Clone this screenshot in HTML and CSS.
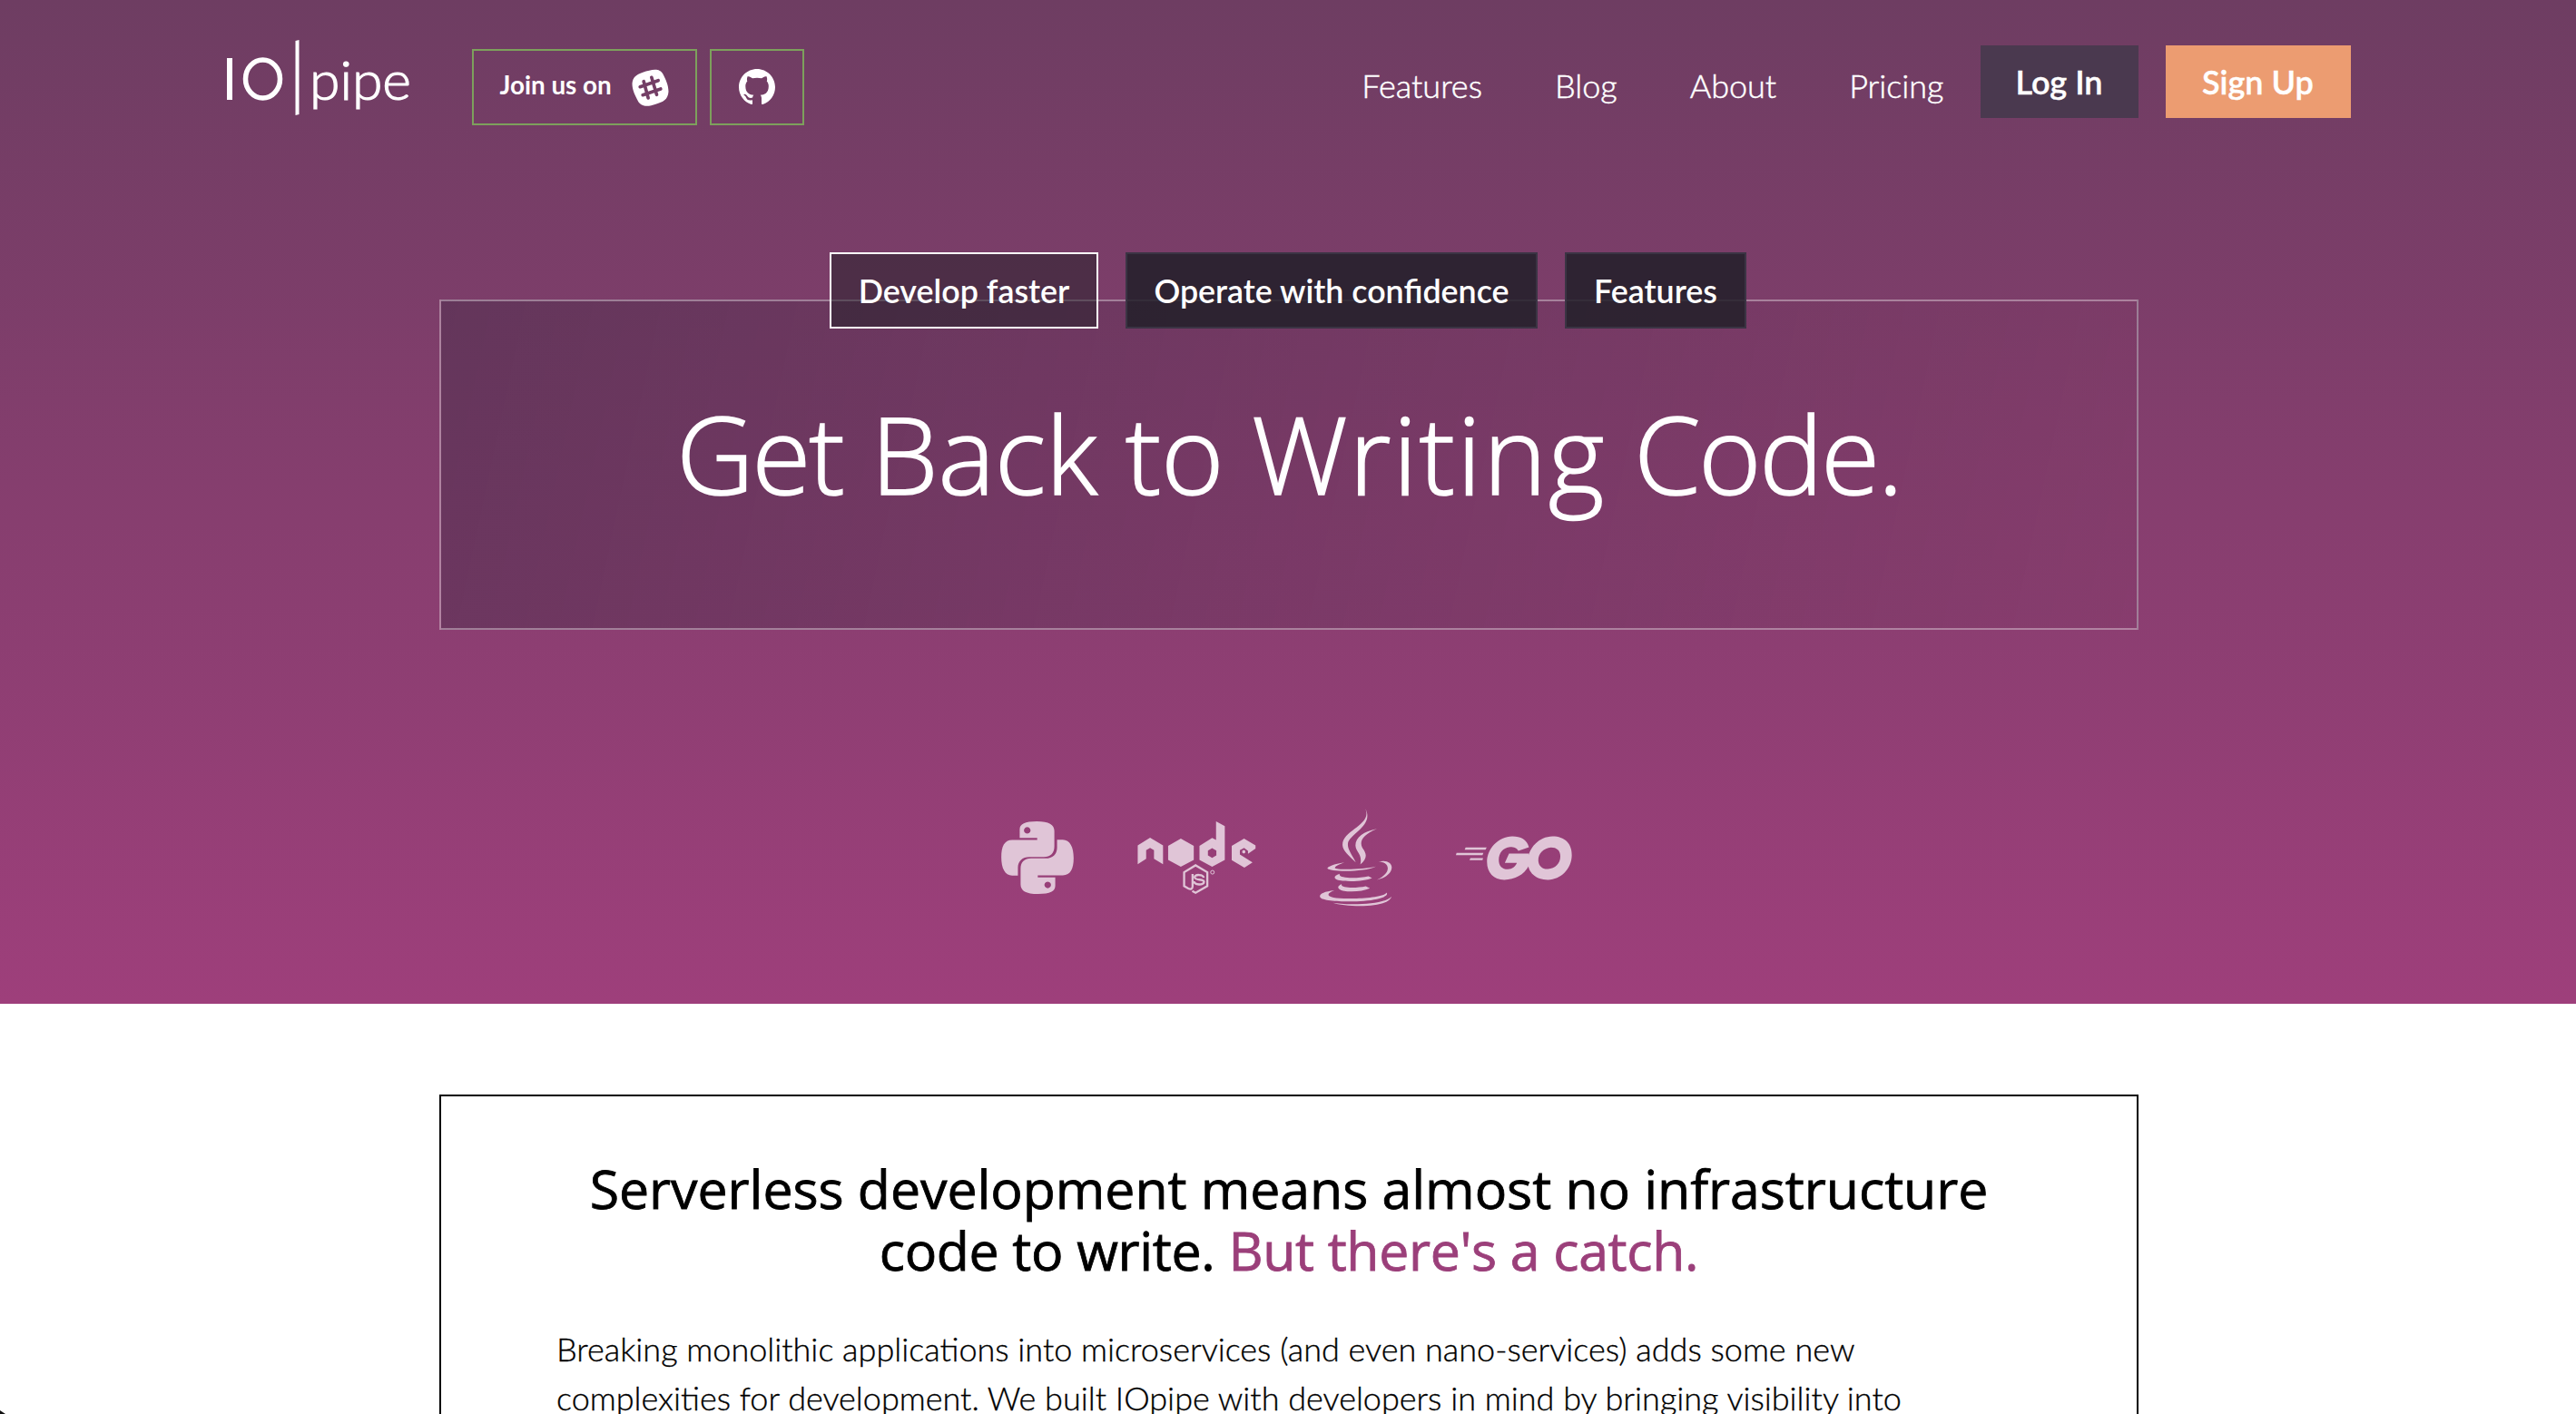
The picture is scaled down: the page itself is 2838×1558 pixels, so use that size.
FILE: index.html
```html
<!DOCTYPE html>
<html lang="en">
<head>
<meta charset="utf-8">
<title>IOpipe</title>
<link rel="stylesheet" href="styles.css">
</head>
<body>
<section class="hero">
  <header class="header">
    <a class="logo">
      <svg width="210" height="90" viewBox="245 40 210 90">
        <rect x="250" y="64" width="6" height="46"/>
        <ellipse class="logo-ring" cx="289.500" cy="87" rx="19" ry="21"/>
        <path d="M325.500 45l4-1v82l-4 1z"/>
        <text class="logo-text" x="341" y="110" textLength="112" lengthAdjust="spacingAndGlyphs">pipe</text>
      </svg>
    </a>
    <div class="social">
      <a class="social-link join">
        <span class="join-text">Join us on</span>
        <svg width="41" height="41" viewBox="47 58 122 123">
          <path d="M83 69C112 59 139 53 150 75C159 93 168 111 168 133C166 160 150 167 126 174C104 182 79 186 67 164C58 145 48 129 48 106C50 85 61 77 83 69Z"/>
          <path class="hash" d="M86 99L101 154M112 86L129 143M74 117L134 96M83 144L142 124"/>
        </svg>
      </a>
      <a class="social-link github">
        <svg width="40" height="40" viewBox="0 0 16 16"><path d="M8 0C3.580 0 0 3.580 0 8c0 3.540 2.290 6.530 5.470 7.590.4.070.55-.17.55-.38 0-.19-.01-.82-.01-1.490-2.010.37-2.530-.49-2.690-.94-.09-.23-.48-.94-.82-1.130-.28-.15-.68-.52-.01-.53.63-.01 1.080.58 1.230.82.72 1.210 1.870.87 2.330.66.07-.52.28-.87.51-1.070-1.780-.2-3.640-.89-3.640-3.950 0-.87.31-1.590.82-2.150-.08-.2-.36-1.020.08-2.120 0 0 .67-.21 2.200.82.64-.18 1.320-.27 2-.27s1.360.09 2 .27c1.530-1.040 2.200-.82 2.200-.82.44 1.100.16 1.920.08 2.120.51.56.82 1.270.82 2.150 0 3.070-1.870 3.750-3.650 3.950.29.25.54.73.54 1.480 0 1.070-.01 1.930-.01 2.200 0 .21.15.46.55.38A8.010 8.010 0 0 0 16 8c0-4.420-3.580-8-8-8z"/></svg>
      </a>
    </div>
    <nav class="nav">
      <a class="nav-link">Features</a>
      <a class="nav-link">Blog</a>
      <a class="nav-link">About</a>
      <a class="nav-link">Pricing</a>
    </nav>
    <div class="actions">
      <a class="button login">Log In</a>
      <a class="button signup">Sign Up</a>
    </div>
  </header>

  <div class="pitch">
    <div class="tabs">
      <a class="tab tab-develop">Develop faster</a>
      <a class="tab tab-operate">Operate with confidence</a>
      <a class="tab tab-features">Features</a>
    </div>
    <h1 class="title"><span class="snug">Get</span> Back to <span class="loose">Writing</span> <span class="tight">Code.</span></h1>
  </div>

  <div class="languages">
    <svg class="python" viewBox="72 101 240 241">
      <path id="snake" fill-rule="evenodd" d="M133 156V128C133 110 150 101 190 101C230 101 248 112 248 133V184C248 207 235 219 213 219H165C142 219 127 233 127 255V281H108C84 281 72 256 72 220C72 185 82 163 108 163H191V156ZM158 120a11 11 0 1 0 .1 0Z"/>
      <use href="#snake" transform="rotate(180 192 221.500)"/>
    </svg>
    <svg class="node" viewBox="522 101 392 241">
      <path fill-rule="evenodd" d="M522 243V181L563 155L606 181V243L576 225V197L563 189L550 197V225ZM665 158L708 182V229L665 252L623 229V182ZM782 101L811 117V229L769 252L727 229V182L769 156L782 163ZM769 190L755 198V214L769 222L783 214V198ZM875 158L913 181V191L888 209V199L875 189L861 197V211L903 237L876 255L834 230V182Z"/>
      <path d="M874 196l5 3v6l-5 3l-5-3v-6z"/>
      <path class="line" d="M703 332L714 338L753 316V270L714 247L676 270V316L690 324C698 328 704 325 704 317V276"/>
      <path class="line" d="M741 288C740 277 710 275 711 287C712 298 742 291 742 302C742 314 709 313 709 300"/>
      <circle class="mark" cx="770" cy="270" r="6"/>
    </svg>
    <svg class="java" viewBox="104 60 240 325">
      <path d="M255 61C278 115 180 130 179 180C180 200 200 215 223 238C208 208 195 195 197 175C200 145 285 115 255 61ZM293 127C250 135 222 155 222 182C223 205 246 210 238 245C262 225 260 210 245 190C233 168 248 145 293 127ZM185 238C150 243 128 253 129 258C135 270 250 272 290 252C250 262 157 264 154 256C154 250 170 244 185 238ZM298 236C325 228 345 240 342 258C339 278 315 292 293 296C318 284 330 270 329 256C327 242 315 236 298 236ZM170 276C145 284 152 293 165 297C200 304 255 300 277 290L265 284C230 292 160 292 170 276ZM176 310C158 319 163 327 180 332C210 338 245 334 270 324L256 317C225 324 170 324 176 310ZM152 331C115 335 100 345 105 354C115 368 200 370 250 366C300 362 335 350 325 338C318 352 250 358 200 358C130 358 115 345 152 331ZM147 372C190 386 330 392 342 351C325 370 270 377 215 377C185 377 160 374 147 372Z"/>
    </svg>
    <svg class="go" viewBox="555 149 385 146">
      <path d="M587 187H657L653 194H584ZM557 205H646L643 212H555ZM603 222H645L643 229H600Z"/>
      <path d="M797 186L762 198C757 188 748 185 735 185C711 187 697 205 697 228C697 248 708 259 727 259C742 259 752 250 757 238H717L731 207H797V247C781 278 750 293 715 294C680 294 658 270 658 235C658 190 695 152 742 150C770 150 790 161 797 186Z"/>
      <path fill-rule="evenodd" d="M875 150C915 150 940 174 939 213C938 258 903 293 860 294C820 294 792 270 793 232C795 187 831 151 875 150ZM870 187C846 189 828 206 828 230C829 248 842 259 860 258C884 257 901 240 901 216C901 197 889 187 870 187Z"/>
    </svg>
  </div>
</section>

<section class="card">
  <h2 class="heading">Serverless development means almost no infrastructure<br><span class="second">code to write. <span class="accent">But there's a catch.</span></span></h2>
  <p class="copy">Breaking monolithic applications into microservices (and even nano-services) adds some new<br>complexities for development. We built IOpipe with developers in mind by bringing visibility into</p>
</section>
<div class="corner"></div>
</body>
</html>
```

FILE: styles.css
```css
* { box-sizing: border-box; }
html, body { height: 100%; }
body {
  margin: 0;
  overflow: hidden;
  display: flex;
  flex-direction: column;
  background: #fff;
  font-family: Lato, "Liberation Sans", sans-serif;
}
svg { display: block; fill: currentColor; }

.hero {
  flex: none;
  height: 1106px;
  display: flex;
  flex-direction: column;
  align-items: center;
  color: #fff;
  background: linear-gradient(#6e3d62, #9e3f7b);
}

.header {
  width: 2345px;
  height: 278px;
  padding-top: 40px;
  margin-left: -4px;
  display: flex;
  align-items: flex-start;
}
.logo { width: 275px; }
.logo-ring { fill: none; stroke: #fff; stroke-width: 5.5; }
.logo-text { font: 300 60px Lato, sans-serif; stroke: #fff; stroke-width: 1.2; }
.social { display: flex; gap: 14px; padding-top: 14px; }
.social-link {
  height: 84px;
  border: 2px solid #7da05c;
  display: flex;
  align-items: center;
}
.join { width: 248px; padding-left: 29px; gap: 21px; }
.join-text { width: 124px; padding-bottom: 5px; font-size: 27.8px; font-weight: 700; white-space: nowrap; }
.hash { fill: none; stroke: #733e65; stroke-width: 11; stroke-linecap: round; }
.github { width: 104px; justify-content: center; }
.nav {
  margin-left: auto;
  height: 108px;
  display: flex;
  align-items: center;
  gap: 80px;
  font-size: 36px;
  font-weight: 300;
  -webkit-text-stroke: .5px;
}
.actions { display: flex; gap: 30px; padding: 10px 0 0 40px; }
.button {
  height: 80px;
  display: flex;
  align-items: center;
  justify-content: center;
  font-size: 36px;
  font-weight: 600;
  -webkit-text-stroke: .4px;
}
.login { width: 174px; background: #4a394f; }
.signup { width: 204px; background: #ec9c71; }

.pitch { width: 1872px; height: 416px; position: relative; margin-left: 2px; }
.pitch::before {
  content: "";
  position: absolute;
  inset: 52px 0 0;
  border: 2px solid rgba(255, 255, 255, .36);
  background: linear-gradient(102deg, rgba(75, 46, 76, .5), rgba(98, 50, 88, .4) 50%, rgba(125, 56, 100, .3));
}
.tabs { position: relative; display: flex; justify-content: center; gap: 30px; padding-right: 2px; }
.tab {
  height: 84px;
  border: 2px solid #3b3444;
  background: rgba(34, 32, 41, .86);
  display: flex;
  align-items: center;
  justify-content: center;
  font-size: 35.8px;
  font-weight: 600;
  white-space: nowrap;
}
.tab-develop { width: 296px; border-color: #fff; background: rgba(34, 32, 41, .52); }
.tab-operate { width: 454px; }
.tab-features { width: 200px; }
.title {
  position: relative;
  margin: 58px 0 0;
  text-align: center;
  font: 300 118px/160px "Open Sans", sans-serif;
  -webkit-text-stroke: 1.6px #fff;
}
.snug { letter-spacing: -2px; }
.loose { letter-spacing: 2.2px; }
.tight { letter-spacing: -2.2px; }

.languages { display: flex; margin-top: 197px; margin-left: -3px; width: 629px; color: #e0c5d7; }
.languages svg { flex: none; }
.python { width: 80px; height: 80px; margin: 14px 70px 0 0; }
.node { width: 131px; height: 80px; margin: 14px 70px 0 0; }
.java { width: 80px; height: 108px; margin-right: 70px; }
.go { width: 128px; height: 49px; margin-top: 30px; }
.line { fill: none; stroke: currentColor; stroke-width: 7; }
.mark { fill: none; stroke: currentColor; stroke-width: 3; }

.card {
  flex: 1;
  width: 1872px;
  margin: 100px 0 0 484px;
  border: 2px solid #000;
  border-bottom: 0;
  color: #000;
}
.heading {
  margin: 67px 0 0;
  text-align: center;
  font: 400 59px/68px "Open Sans", sans-serif;
  letter-spacing: -.06px;
  -webkit-text-stroke: .8px;
}
.second { letter-spacing: -.35px; }
.accent { color: #9b3f7a; }
.copy { margin: 48px 0 0 127px; font-size: 36px; font-weight: 300; line-height: 54px; white-space: nowrap; -webkit-text-stroke: .35px; }

.corner {
  position: absolute;
  left: 0;
  bottom: 0;
  width: 6px;
  height: 4px;
  background: #111;
  clip-path: polygon(0 0, 100% 100%, 0 100%);
}
```
